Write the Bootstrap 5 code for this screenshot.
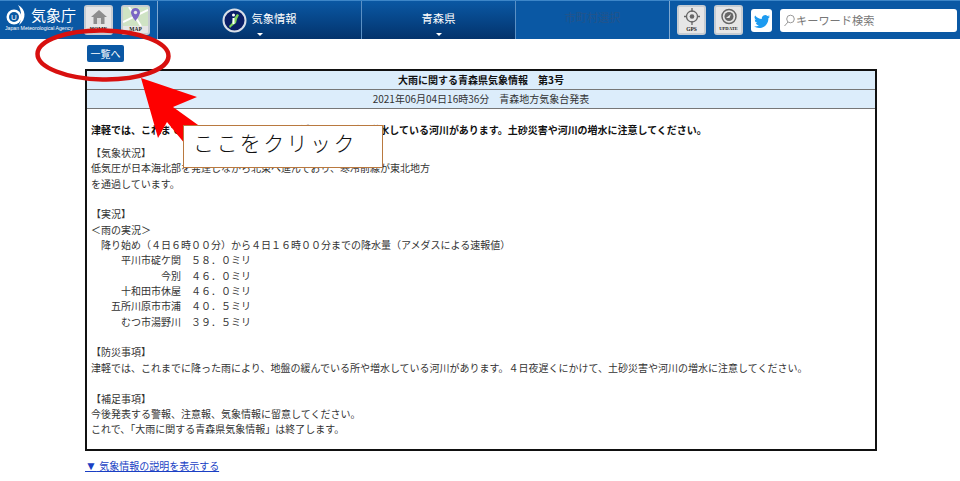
<!DOCTYPE html>
<html lang="ja"><head><meta charset="utf-8"><title>気象情報</title>
<link href="https://cdn.jsdelivr.net/npm/bootstrap@5.3.0/dist/css/bootstrap.min.css" rel="stylesheet">
<style>
html,body{height:481px;overflow:hidden}
body{font-family:"Noto Sans CJK JP","Liberation Sans",sans-serif;font-size:10px;color:#222;background:#fff;position:relative}
.jma-bar{height:39px;background:#0a58a4;border-top:1px solid #3d86c8;color:#fff}
.jma-logo{width:158px;flex:none;height:38px;padding-left:5px;border-right:1px solid #7fa8d0}
.jma-brand{width:74px;flex:none;margin-right:5px;overflow:hidden}
.jma-logo-text{font-size:15px;line-height:18px;white-space:nowrap}
.jma-logo-en{font-size:5.2px;line-height:6px;white-space:nowrap;font-family:"Liberation Sans",sans-serif;margin-top:-1px}
.jma-tile{width:29px;height:30px;margin-top:4px;border-radius:3px;background:#e6e6e6;border:2px solid #c6ccd2;color:#222;font:bold 5.5px/6px "Liberation Serif",serif;text-align:center;flex:none;overflow:hidden}
.jma-tile-sm{font-size:4.6px}
.jma-tile-gap{margin-left:8px}
.jma-tile svg{display:block;margin:0 auto}
.jma-seg{height:38px;flex:none;background:linear-gradient(#0a58a4,#03336c);font-size:11.3px;line-height:14px;border-right:1px solid #5b90c4;position:relative;padding-bottom:5px}
.jma-seg-a{width:204px}
.jma-seg-b{width:154px}
.jma-seg-icon{margin-top:5px}
.jma-brand-row{margin-top:3px}
.jma-caret{position:absolute;left:50%;bottom:3px;margin-left:-3px;border:3px solid transparent;border-top:3px solid #fff;border-bottom:0}
.jma-muni{width:154px;flex:none;height:38px;font-size:11.2px;color:#24548a;border-right:1px solid #7fa8d0;padding-bottom:5px}
.jma-right{padding-left:7px;gap:8px}
.jma-search{width:177px;height:23px;margin:8px 0 0;background:#fff;border-radius:3px;color:#777;font-size:11.2px;flex:none;padding-left:3px}
.jma-tw{width:21px;height:23px;margin-top:8px;background:#fff;border-radius:3px;flex:none}
.jma-back{background:#0a58a4;color:#fff;font-size:10px;line-height:12px;border-radius:2px;margin:6px 0 0 87px;width:37px;height:17px}
.jma-box{margin:7px 0 0 85px;width:792px;height:382px;border:2px solid #111}
.jma-h1,.jma-h2{background:#dcedfb;text-align:center;border-bottom:1px solid #777}
.jma-h1{height:19px;line-height:18px;font-weight:700;color:#111}
.jma-h2{height:19px;line-height:18px;color:#333}
.jma-body{padding:13px 4px 0;line-height:15.35px;white-space:pre;color:#333}
.jma-lead{font-weight:700;color:#111;margin-bottom:8px;line-height:15px;letter-spacing:-.02px}
.jma-link{margin:8px 0 0 85px;display:inline-block;color:#1a3fc4;line-height:14px}
.jma-tri{font-family:"Liberation Sans",sans-serif;font-size:12px;line-height:0}
.jma-note{position:absolute;left:183px;top:125px;width:200px;height:43px;background:#fff;border:1px solid #b9793f;font-size:21px;line-height:33px;padding-left:9px;letter-spacing:2.4px;color:#111;font-weight:300}
.jma-over{position:absolute;left:0;top:0;pointer-events:none}
</style></head>
<body>
<div class="jma-bar d-flex align-items-start">
  <div class="jma-logo d-flex align-items-start">
    <div class="jma-brand">
      <div class="jma-brand-row d-flex align-items-center gap-1">
        <svg width="22" height="22" viewBox="0 0 22 22"><circle cx="9" cy="13" r="7.500" fill="#fff"/><circle cx="9" cy="13" r="5" fill="#0a58a4"/><path d="M13 1c8 4 9 14 1 20 3-6 3-14-1-20z" fill="#fff"/><text x="9" y="16" font-size="8" fill="#fff" text-anchor="middle" font-family="Liberation Sans">U</text></svg>
        <span class="jma-logo-text">気象庁</span>
      </div>
      <div class="jma-logo-en">Japan Meteorological Agency</div>
    </div>
    <div class="jma-tile"><svg width="20" height="19" viewBox="0 0 20 19"><path d="M10 3 2 10h2.500v7h11v-7H18z" fill="#8d8d8d"/><rect x="8" y="11" width="4" height="6" fill="#d8d8d8"/></svg>HOME</div>
    <div class="jma-tile jma-tile-gap"><svg width="25" height="19" viewBox="0 0 25 19"><rect width="25" height="19" fill="#cfe3c4"/><path d="M0 15 25 3M6 0l12 19" stroke="#fff" stroke-width="2"/><path d="M12.500 1a4.500 4.500 0 0 0-4.500 4.500c0 3 4.500 8.500 4.500 8.500S17 8.500 17 5.500A4.500 4.500 0 0 0 12.500 1z" fill="#7b66c4"/><circle cx="12.500" cy="5.500" r="1.700" fill="#e6e6e6"/></svg>MAP</div>
  </div>
  <div class="jma-seg jma-seg-a d-flex align-items-center justify-content-center gap-1">
    <svg class="jma-seg-icon" width="25" height="25" viewBox="0 0 25 25"><circle cx="12.500" cy="12.500" r="11" fill="#0a1f66" stroke="#d8dfe8" stroke-width="2"/><path d="M15 6l2 1-2 4-1 4-4 3-2 2-1-2 3-3 1-4 2-2z" fill="#7fd35a"/><circle cx="11.500" cy="7" r="1.500" fill="#fff"/><path d="M10.500 10h2v6h-2z" fill="#fff"/></svg>
    <span>気象情報</span><i class="jma-caret"></i>
  </div>
  <div class="jma-seg jma-seg-b d-flex align-items-center justify-content-center"><span>青森県</span><i class="jma-caret"></i></div>
  <div class="jma-muni d-flex align-items-center justify-content-center"><span>市町村選択</span></div>
  <div class="jma-right d-flex align-items-start">
    <div class="jma-tile"><svg width="20" height="19" viewBox="0 0 20 19"><circle cx="10" cy="9.500" r="5.500" fill="none" stroke="#666" stroke-width="1.300"/><circle cx="10" cy="9.500" r="2.300" fill="#666"/><path d="M10 1v4M10 14v4M2 9.500h3M15 9.500h3" stroke="#666" stroke-width="1.300"/></svg>GPS</div>
    <div class="jma-tile jma-tile-sm"><svg width="20" height="19" viewBox="0 0 20 19"><circle cx="10" cy="9.500" r="7" fill="none" stroke="#666" stroke-width="1.500"/><circle cx="10" cy="9.500" r="4.500" fill="#666"/><path d="M7 11l5-4-1.500 4z" fill="#e6e6e6"/></svg>UPDATE</div>
    <div class="jma-tw d-flex align-items-center justify-content-center"><svg width="16" height="16" viewBox="0 0 16 16"><path fill="#1d9bf0" d="M5.026 15c6.038 0 9.341-5.003 9.341-9.334 0-.14 0-.282-.006-.422A6.685 6.685 0 0 0 16 3.542a6.658 6.658 0 0 1-1.889.518 3.301 3.301 0 0 0 1.447-1.817 6.533 6.533 0 0 1-2.087.793A3.286 3.286 0 0 0 7.875 6.03a9.325 9.325 0 0 1-6.767-3.429 3.289 3.289 0 0 0 1.018 4.382A3.323 3.323 0 0 1 .64 6.575v.045a3.288 3.288 0 0 0 2.632 3.218 3.203 3.203 0 0 1-.865.115 3.23 3.23 0 0 1-.614-.057 3.283 3.283 0 0 0 3.067 2.277A6.588 6.588 0 0 1 .78 13.58a6.32 6.32 0 0 1-.78-.045A9.344 9.344 0 0 0 5.026 15z"/></svg></div>
    <div class="jma-search d-flex align-items-center"><svg width="13" height="13" viewBox="0 0 13 13"><circle cx="7.500" cy="5" r="3.800" fill="none" stroke="#999"/><path d="M5 8 1.500 12" stroke="#999"/></svg><span>キーワード検索</span></div>
  </div>
</div>
<div class="jma-back d-flex align-items-center justify-content-center">一覧へ</div>
<div class="jma-box">
  <div class="jma-h1">大雨に関する青森県気象情報　第3号</div>
  <div class="jma-h2">2021年06月04日16時36分　青森地方気象台発表</div>
  <div class="jma-body"><div class="jma-lead">津軽では、これまでに降った雨により、地盤の緩んでいる所や増水している河川があります。土砂災害や河川の増水に注意してください。</div>【気象状況】
低気圧が日本海北部を発達しながら北東へ進んでおり、寒冷前線が東北地方
を通過しています。

【実況】
＜雨の実況＞
　降り始め（４日６時００分）から４日１６時００分までの降水量（アメダスによる速報値）
　　　平川市碇ケ関　５８．０ミリ
　　　　　　　今別　４６．０ミリ
　　　十和田市休屋　４６．０ミリ
　　五所川原市市浦　４０．５ミリ
　　　むつ市湯野川　３９．５ミリ

【防災事項】
津軽では、これまでに降った雨により、地盤の緩んでいる所や増水している河川があります。４日夜遅くにかけて、土砂災害や河川の増水に注意してください。

【補足事項】
今後発表する警報、注意報、気象情報に留意してください。
これで、「大雨に関する青森県気象情報」は終了します。</div>
</div>
<a class="jma-link" href="#"><span class="jma-tri">▼</span> 気象情報の説明を表示する</a>
<svg class="jma-over" width="960" height="200" viewBox="0 0 960 200">
  <ellipse cx="103" cy="55" rx="65.500" ry="24.500" fill="none" stroke="#d8100f" stroke-width="4.500" transform="rotate(1 103 55)"/>
  <path d="M141 78 197 97 173 107 205 130 190 150 167 122 158 138z" fill="#fe0000"/>
</svg>
<div class="jma-note">ここをクリック</div>
</body></html>
